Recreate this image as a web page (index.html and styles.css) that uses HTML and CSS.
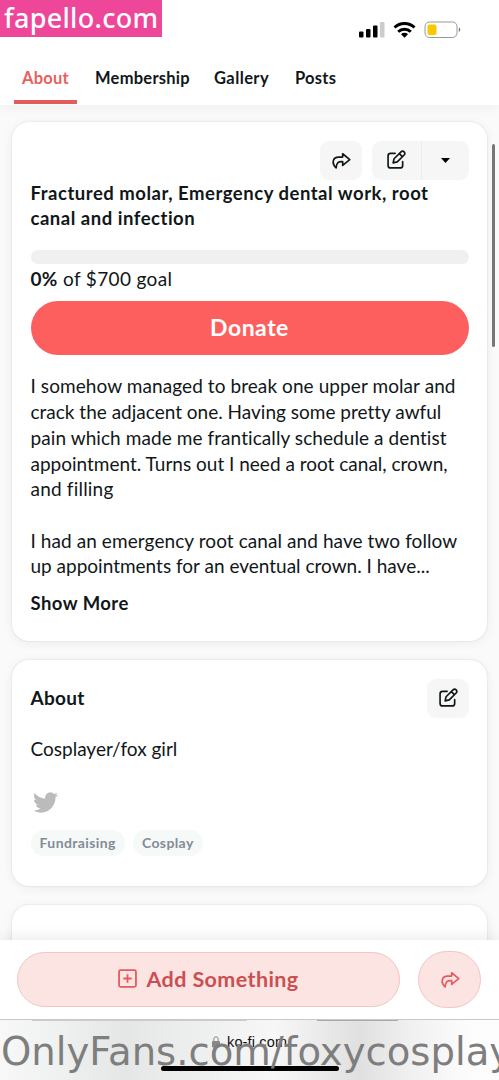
FILE: index.html
```html
<!DOCTYPE html>
<html lang="en">
<head>
<meta charset="utf-8">
<title>Ko-fi</title>
<link rel="stylesheet" href="styles.css">
</head>
<body>
<svg width="0" height="0" class="defs">
  <symbol id="share" viewBox="0 0 24 24"><path d="M14 4.500 22.500 11.500l-8.500 7v-4.500C9 13.500 6.500 15 6.200 21.500 0 15.500 2.500 8.500 9 8.500h5z" fill="none" stroke="currentColor" stroke-width="2" stroke-linejoin="round"/></symbol>
  <symbol id="edit" viewBox="0 0 24 24"><path d="M11 4H5.500A3 3 0 0 0 2.500 7v11.500a3 3 0 0 0 3 3H17a3 3 0 0 0 3-3V14M8.500 15.500l1.200-5L18 2.200a2.600 2.600 0 0 1 3.800 3.800l-8.300 8.300zM16 4.300l3.700 3.700" fill="none" stroke="currentColor" stroke-width="2" stroke-linecap="round" stroke-linejoin="round"/></symbol>
</svg>
<div class="screen">
  <header class="header">
    <div class="status">
      <svg width="102" height="18" viewBox="0 0 102 18">
        <rect x="0" y="10.500" width="4.500" height="6" rx="1"/><rect x="7" y="8" width="4.500" height="8.500" rx="1"/><rect x="14" y="4.500" width="4.500" height="12" rx="1"/><rect x="21" y="1" width="4.500" height="15.500" rx="1" fill="#ccc"/>
        <g fill="none" stroke="#000" stroke-width="3"><path d="M35.500 6.500a14.500 14.500 0 0 1 20 0"/><path d="M39.200 10.800a9 9 0 0 1 12.600 0"/></g><path d="M42 13.300a5 5 0 0 1 7 0L45.500 16.700z"/>
        <rect x="66" y="1" width="32" height="15.500" rx="4.500" fill="#fff" stroke="#999"/><rect x="68.500" y="3.500" width="9" height="10.500" rx="2" fill="#f8c800"/><path d="M99.800 6.500q3 2.200 0 4.500z" fill="#777"/>
      </svg>
    </div>
    <nav class="tabs">
      <a class="tab active">About</a><a class="tab membership">Membership</a><a class="tab gallery">Gallery</a><a class="tab">Posts</a>
    </nav>
  </header>
  <main class="feed">
    <section class="card goal">
      <div class="actions">
        <button class="tool"><svg width="20" height="20"><use href="#share"/></svg></button>
        <div class="split"><button class="tool"><svg width="20" height="20"><use href="#edit"/></svg></button><button class="tool caret"><svg width="9" height="5"><path d="M0 0h9L4.500 5z"/></svg></button></div>
      </div>
      <h2 class="title"><span>Fractured molar, Emergency dental work, root</span><span>canal and infection</span></h2>
      <div class="progress"></div>
      <p class="amount"><b>0%</b> of $700 goal</p>
      <button class="donate">Donate</button>
      <p class="story"><span>I somehow managed to break one upper molar and</span><span class="tight">crack the adjacent one. Having some pretty awful</span><span>pain which made me frantically schedule a dentist</span><span class="tight">appointment. Turns out I need a root canal, crown,</span><span class="loose">and filling</span><span class="blank"></span><span>I had an emergency root canal and have two follow</span><span class="tight">up appointments for an eventual crown. I have...</span></p>
      <a class="more">Show More</a>
    </section>
    <section class="card about">
      <div class="about-head"><h2 class="about-title">About</h2><button class="tool"><svg width="20" height="20"><use href="#edit"/></svg></button></div>
      <p class="bio">Cosplayer/fox girl</p>
      <svg class="bird" width="25" height="21" viewBox="0 2 24 20"><path fill="#bbb" d="M23.950 4.570a10 10 0 0 1-2.820.770 4.960 4.960 0 0 0 2.160-2.720c-.950.550-2 .950-3.130 1.180a4.920 4.920 0 0 0-8.380 4.480C7.690 8.090 4.070 6.130 1.640 3.160a4.920 4.920 0 0 0 1.520 6.570 4.900 4.900 0 0 1-2.230-.610v.060a4.920 4.920 0 0 0 3.950 4.830 5 5 0 0 1-2.210.080 4.940 4.940 0 0 0 4.600 3.420A9.870 9.870 0 0 1 0 19.540a13.990 13.990 0 0 0 7.550 2.210c9.050 0 14-7.500 14-13.980 0-.210 0-.420-.020-.630a9.940 9.940 0 0 0 2.420-2.570z"/></svg>
      <div class="tags"><span class="tag">Fundraising</span><span class="tag">Cosplay</span></div>
    </section>
    <section class="card next"></section>
  </main>
  <div class="dock">
    <button class="add"><svg width="19" height="19" viewBox="0 0 18 18" fill="none" stroke="#e25b5d" stroke-width="1.700"><rect x="1" y="1" width="16" height="16" rx="1.500"/><path d="M9 5v8M5 9h8"/></svg><span>Add Something</span></button>
    <button class="round"><svg width="20" height="20"><use href="#share"/></svg></button>
  </div>
  <footer class="browser">
    <div class="smudges"><i></i><i></i></div>
    <div class="url"><svg width="8" height="12" viewBox="0 0 8 12"><rect y="5" width="8" height="6.500" rx="1" fill="#888"/><path d="M1.800 5V3a2.200 2.200 0 0 1 4.400 0v2" fill="none" stroke="#888"/></svg><span>ko-fi.com</span></div>
    <div class="home"></div>
  </footer>
  <div class="clock">6:20</div>
  <div class="badge">fapello.com</div>
  <div class="watermark">OnlyFans.com/foxycosplay</div>
  <div class="scrollbar"></div>
</div>
</body>
</html>
```
FILE: styles.css
```css
* { box-sizing: border-box; }
body { margin: 0; font-family: Lato, "Noto Sans", sans-serif; color: #111719; }
button { border: 0; padding: 0; margin: 0; font: inherit; color: inherit; display: flex; align-items: center; justify-content: center; }
h2, p { margin: 0; }
svg { display: block; }
.defs { position: absolute; }
.screen { position: relative; width: 499px; height: 1080px; overflow: hidden; display: flex; flex-direction: column; background: #fafafa; }
.header { height: 105px; flex: none; background: #fff; box-shadow: 0 2px 12px #0000000d; }
.status { height: 54px; padding: 21px 0 0 359px; }
.tabs { height: 51px; display: flex; align-items: flex-start; padding-left: 14px; gap: 18px; font-size: 16.500px; font-weight: 700; letter-spacing: .25px; }
.tab { height: 50px; padding: 13px 0 0; line-height: 22px; white-space: nowrap; }
.active { width: 63px; text-align: center; color: #e8605e; border-bottom: 4px solid #e45d5b; }
.membership { width: 101px; }
.gallery { width: 63px; letter-spacing: .4px; }
.feed { flex: 1; min-height: 0; overflow: hidden; padding: 17px 12px 0; display: flex; flex-direction: column; gap: 19px; }
.card { flex: none; background: #fff; border-radius: 17px; box-shadow: 0 0 2px #0002, 0 2px 12px #0000000f; padding: 18.500px; white-space: nowrap; }
.goal { height: 519px; }
.actions { display: flex; justify-content: flex-end; gap: 10px; }
.tool { width: 42px; height: 39px; border-radius: 9px; background: #f6f6f6; }
.split { display: flex; }
.split .tool { width: 49px; border-radius: 9px 0 0 9px; }
.split .caret { width: 48px; border-left: 1px solid #ededed; border-radius: 0 9px 9px 0; }
.title { padding-top: 1px; font-size: 18.500px; line-height: 25.700px; font-weight: 700; letter-spacing: .52px; }
.title span, .story span { display: block; }
.progress { height: 14px; margin-top: 18px; border-radius: 7px; background: #f0f0f0; }
.amount { font-size: 19px; line-height: 26px; margin-top: 2px; letter-spacing: .35px; }
.donate { width: 100%; height: 54px; margin-top: 9.500px; padding-bottom: 3px; border-radius: 27px; background: #fd5f5e; color: #fff; font-size: 23px; font-weight: 700; letter-spacing: .5px; }
.story { margin-top: 18px; font-size: 19px; line-height: 25.700px; letter-spacing: .08px; }
.story .tight { letter-spacing: 0; font-variant-ligatures: none; }
.story .loose { letter-spacing: .2px; }
.story .blank { height: 25.700px; }
.more { display: block; margin-top: 11px; font-size: 18.500px; line-height: 26px; font-weight: 700; letter-spacing: .45px; }
.about { height: 226px; }
.about-head { display: flex; justify-content: space-between; align-items: center; }
.about-title { padding-bottom: 2px; font-size: 19px; letter-spacing: .3px; }
.bio { margin-top: 18px; font-size: 19px; line-height: 26px; }
.bird { margin: 30px 0 0 2.500px; }
.tags { display: flex; gap: 8px; margin-top: 17px; }
.tag { height: 26px; padding: 0 9px; border-radius: 13px; background: #f5f9f8; color: #858b95; font-size: 14px; font-weight: 700; line-height: 26px; letter-spacing: .4px; }
.next { height: 100px; }
.dock { position: relative; height: 79px; flex: none; padding: 11px 18px 0 17px; display: flex; justify-content: space-between; background: #fff; box-shadow: 0 -3px 14px #00000014; }
.add { width: 383px; height: 55px; margin-top: 1px; padding-bottom: 2px; border: 1px solid #f1c5c4; border-radius: 28px; background: #fce4e3; color: #cb4f50; gap: 9px; font-size: 21.500px; font-weight: 700; letter-spacing: .4px; white-space: nowrap; }
.round { width: 63px; height: 57px; padding-bottom: 2px; border: 1px solid #f1c5c4; border-radius: 30px; background: #fce4e3; color: #e25b5d; }
.browser { position: relative; height: 61px; flex: none; border-top: 1px solid #c9c9c9; background: linear-gradient(90deg, #f8f8f8, #eff0f0 12%, #e5e7e7 25%, #eeefef 40%, #f7f7f7 55%, #e0e0e0 72%, #f0f0f0 82%, #fdfdfd 95%); }
.smudges { height: 1px; display: flex; justify-content: space-between; padding: 0 101px 0 32px; }
.smudges i { width: 215px; background: #ccc; }
.smudges i + i { width: 81px; background: #aaa; }
.url { display: flex; gap: 7px; padding: 12px 0 0 212px; font: 14.500px/18px "Liberation Sans", sans-serif; color: #111; letter-spacing: .15px; height: 44px; }
.url svg { margin-top: 3px; }
.home { width: 178px; height: 5px; margin: 1px 0 0 161px; border-radius: 3px; background: #000; }
.clock { position: absolute; left: 65px; top: 21px; font: bold 17px/20px Inter, sans-serif; }
.badge { position: absolute; left: 0; top: 0; width: 162px; height: 37px; padding-left: 4px; background: #ee4699; color: #fff; font: 500 27px/35px "Noto Sans", sans-serif; letter-spacing: .3px; white-space: nowrap; }
.watermark { position: absolute; left: 1px; top: 1029px; font: 38.600px/46px "DejaVu Sans", sans-serif; color: #7e7e7e; white-space: nowrap; }
.scrollbar { position: absolute; left: 492px; top: 144px; width: 3px; height: 203px; border-radius: 2px; background: #777; }
```
